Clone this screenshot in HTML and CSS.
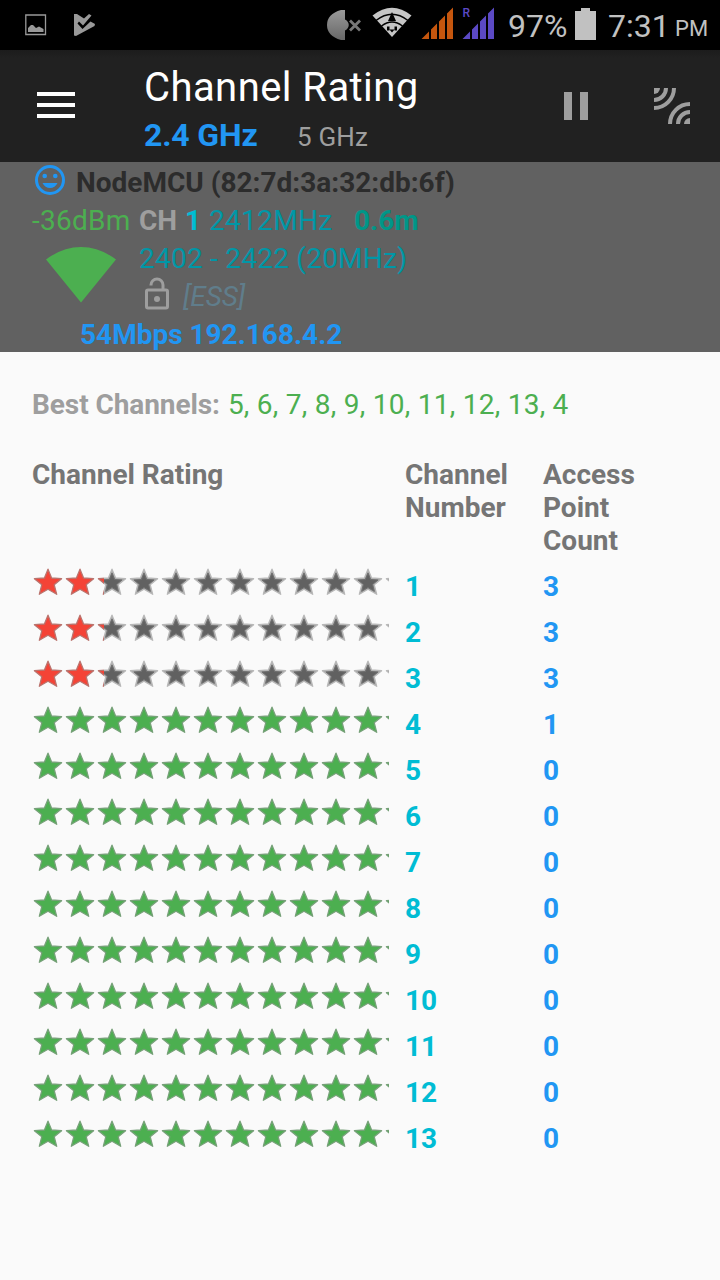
FILE: index.html
```html
<!DOCTYPE html>
<html lang="en">
<head>
<meta charset="utf-8">
<title>Channel Rating</title>
<link rel="stylesheet" href="styles.css">
</head>
<body>
<svg class="defs" width="0" height="0" aria-hidden="true">
  <defs>
    <path id="star" d="M16 1.2 19.6 10 29.6 10.7 22.2 16.7 24.7 26.3 16 21.3 7.3 26.3 9.8 16.7 2.4 10.7 12.4 10Z" stroke-width="1.3" stroke-linejoin="round"/>
    <path id="core" d="M16 5 18.7 11.5 26 12 20.600 16.4 22.300 23.300 16 19.6 9.700 23.300 11.4 16.4 6 12 13.3 11.5Z"/>
    <pattern id="p-grey" width="32" height="28" patternUnits="userSpaceOnUse"><use href="#star" fill="#a0a0a0" stroke="#b8b8b8"/><use href="#core" fill="#616161" stroke="#6e6e6e" stroke-width="1"/></pattern>
    <pattern id="p-red" width="32" height="28" patternUnits="userSpaceOnUse"><use href="#star" fill="#f44336" stroke="#b9736d"/></pattern>
    <pattern id="p-green" width="32" height="28" patternUnits="userSpaceOnUse"><use href="#star" fill="#4caf50" stroke="#76a078"/></pattern>
    <symbol id="low" viewBox="0 0 357 28"><rect x="72" width="285" height="28" fill="url(#p-grey)"/><rect width="72" height="28" fill="url(#p-red)"/></symbol>
    <symbol id="full" viewBox="0 0 357 28"><rect width="357" height="28" fill="url(#p-green)"/></symbol>
  </defs>
</svg>

<header class="status">
  <svg class="notif" width="80" height="50" viewBox="0 0 80 50">
    <path d="M5.800 15H25.500V34.500H5.800Z" fill="none" stroke="#999" stroke-width="1.300"/>
    <path d="M8 32V28L11 25H13L16 28L19 26.500L23.500 29V32Z" fill="#999"/>
    <path d="M54 14 57 14 64 18.500 69 14 71.500 15.500 63 25.500 59 21.500 57.500 23.500 62.500 29 70.500 21.500 75 24 74.500 26 56 36 54 35.500Z" fill="#999"/>
  </svg>
  <svg class="signals" width="176" height="50" viewBox="322 0 176 50">
    <defs><linearGradient id="mute" x1="0" y1="0" x2="0" y2="1"><stop offset="0" stop-color="#999"/><stop offset="1" stop-color="#686868"/></linearGradient></defs>
    <path d="M345 10V19.500C350 22 350 28 345 30.500V40H341Q327 36 327 25Q327 14 341 10Z" fill="url(#mute)"/>
    <path d="M350 20.500 360 30.500M360 20.500 350 30.500" stroke="#777" stroke-width="2.800"/>
    <path d="M372.500 15.500Q392 0 411.500 15.500L392 37Z" fill="#c6c6c6"/>
    <g fill="none" stroke="#000" stroke-width="1.400"><path d="M376 20.500Q392 8 408 20.500M381.500 26Q392 18 402.500 26"/></g>
    <path d="M392 12 396 21H388ZM387 26.500H389.500V30.500H387ZM394.500 26.500H397V30.500H394.500ZM389.500 29.500H394.500L392 32.500Z" fill="#000"/>
    <path d="M421.500 39 429 31.500V39ZM431 39V29.500L437 23.500V39ZM439 39V21.500L445 15.500V39ZM447 39V13.500L453 7.500V39Z" fill="#c5560e"/>
    <path d="M462.500 39 470 31.500V39ZM472 39V29.500L478 23.500V39ZM480 39V21.500L486 15.500V39ZM488 39V13.500L494 7.500V39Z" fill="#5b49c4"/>
    <text x="462.500" y="16.500" class="roaming">R</text>
  </svg>
  <span class="percent">97%</span>
  <svg class="battery" width="22" height="50" viewBox="0 0 22 50"><path d="M6 8H15V11H21V40H0V11H6Z" fill="#c1c1c1"/></svg>
  <span class="clock">7:31</span><span class="ampm">PM</span>
</header>

<nav class="appbar">
  <svg class="menu" width="38" height="27" viewBox="0 0 38 27"><path d="M0 0H38V4H0ZM0 11H38V15H0ZM0 22H38V26H0Z" fill="#fff"/></svg>
  <div class="titles">
    <h1>Channel Rating</h1>
    <div class="bands"><span class="band-on">2.4 GHz</span><span class="band-off">5 GHz</span></div>
  </div>
  <svg class="pause" width="24" height="28" viewBox="0 0 24 28"><path d="M0 0H8V28H0ZM16 0H24V28H16Z" fill="#9e9e9e"/></svg>
  <svg class="waves" width="36" height="36" viewBox="0 0 36 36">
    <g id="quarter" fill="none" stroke="#9e9e9e" stroke-width="4"><path d="M0 0H6A6 6 0 0 1 0 6Z" fill="#9e9e9e" stroke="none"/><path d="M12 0A12 12 0 0 1 0 12M20 0A20 20 0 0 1 0 20"/></g>
    <use href="#quarter" transform="rotate(180 18 18)"/>
  </svg>
</nav>

<section class="connection">
  <div class="line name">
    <svg width="32" height="32" viewBox="0 0 32 32"><circle cx="16" cy="16" r="13.500" fill="none" stroke="#2196f3" stroke-width="3"/><circle cx="10.700" cy="12" r="2.300" fill="#2196f3"/><circle cx="21.300" cy="12" r="2.300" fill="#2196f3"/><path d="M8.500 19H23.500Q21 24 16 24Q11 24 8.500 19Z" fill="#2196f3"/></svg>
    <strong>NodeMCU (82:7d:3a:32:db:6f)</strong>
  </div>
  <div class="line radio"><span class="level">-36dBm</span><strong class="ch">CH</strong><strong class="chnum">1</strong><span class="freq">2412MHz</span><strong class="distance">0.6m</strong></div>
  <div class="middle">
    <svg class="wifi" width="72" height="58" viewBox="0 0 72 58"><path d="M1 13.500Q17.500 1 36 1Q54.500 1 71 13.500L36 56.500Z" fill="#4caf50"/></svg>
    <div>
      <div class="line range">2402 - 2422 (20MHz)</div>
      <div class="line security"><svg width="26" height="36" viewBox="0 0 26 36"><rect x="2.500" y="14" width="21" height="18" rx="1.500" fill="none" stroke="#9e9e9e" stroke-width="3"/><circle cx="13" cy="23" r="3" fill="#9e9e9e"/><path d="M7 9.500V9A6 6 0 0 1 19 9V13.500" fill="none" stroke="#9e9e9e" stroke-width="3"/></svg><em>[ESS]</em></div>
    </div>
  </div>
  <div class="line link">54Mbps 192.168.4.2</div>
</section>

<main>
  <p class="best"><strong>Best Channels:</strong><span>5, 6, 7, 8, 9, 10, 11, 12, 13, 4</span></p>
  <div class="row head"><span>Channel Rating</span><span>Channel Number</span><span>Access Point Count</span></div>
  <div class="row"><svg class="stars"><use href="#low"/></svg><b class="num">1</b><b class="count">3</b></div>
  <div class="row"><svg class="stars"><use href="#low"/></svg><b class="num">2</b><b class="count">3</b></div>
  <div class="row"><svg class="stars"><use href="#low"/></svg><b class="num">3</b><b class="count">3</b></div>
  <div class="row"><svg class="stars"><use href="#full"/></svg><b class="num">4</b><b class="count">1</b></div>
  <div class="row"><svg class="stars"><use href="#full"/></svg><b class="num">5</b><b class="count">0</b></div>
  <div class="row"><svg class="stars"><use href="#full"/></svg><b class="num">6</b><b class="count">0</b></div>
  <div class="row"><svg class="stars"><use href="#full"/></svg><b class="num">7</b><b class="count">0</b></div>
  <div class="row"><svg class="stars"><use href="#full"/></svg><b class="num">8</b><b class="count">0</b></div>
  <div class="row"><svg class="stars"><use href="#full"/></svg><b class="num">9</b><b class="count">0</b></div>
  <div class="row"><svg class="stars"><use href="#full"/></svg><b class="num">10</b><b class="count">0</b></div>
  <div class="row"><svg class="stars"><use href="#full"/></svg><b class="num">11</b><b class="count">0</b></div>
  <div class="row"><svg class="stars"><use href="#full"/></svg><b class="num">12</b><b class="count">0</b></div>
  <div class="row"><svg class="stars"><use href="#full"/></svg><b class="num">13</b><b class="count">0</b></div>
</main>
</body>
</html>
```
FILE: styles.css
```css
* { box-sizing: border-box; }
body { margin: 0; width: 720px; height: 1280px; overflow: hidden; background: #fafafa; font-family: Roboto, sans-serif; font-size: 28px; white-space: nowrap; }
svg { display: block; flex: none; }
.defs { position: absolute; }
.status { height: 50px; display: flex; background: #000; color: #c1c1c1; line-height: 52px; }
.notif { margin-left: 20px; }
.signals { margin-left: 222px; }
.roaming { font: 500 12px Roboto, sans-serif; fill: #5b49c4; }
.percent { width: 67px; margin-left: 10px; font-size: 32px; }
.battery { width: 22px; }
.clock { width: 64px; margin-left: 11px; font-size: 32px; }
.ampm { margin-left: 3px; font-size: 22px; line-height: 58px; }
.appbar { height: 112px; display: flex; background: linear-gradient(#1c1c1c, #212121 8px); }
.menu { margin: 42px 0 0 37px; }
.titles { width: 420px; padding: 14px 0 0 69px; }
h1 { margin: 0; font-size: 40px; font-weight: 400; line-height: 48px; letter-spacing: 0.43px; color: #fff; }
.bands { display: flex; line-height: 46px; }
.band-on { width: 153px; font-size: 32px; font-weight: 700; letter-spacing: -0.15px; color: #2196f3; }
.band-off { font-size: 26px; line-height: 50px; letter-spacing: 0.2px; color: #9e9e9e; }
.pause { margin: 42px 0 0 69px; }
.waves { margin: 38px 0 0 66px; }
.connection { height: 190px; background: #616161; }
.line { height: 38px; line-height: 41px; display: flex; }
.name { padding-left: 34px; color: #2c2c2c; }
.name svg { margin: 2px 10px 0 0; }
.radio { padding-left: 32px; }
.level { width: 107px; letter-spacing: 0.25px; color: #4caf50; }
.ch { width: 46px; color: #9e9e9e; }
.chnum { width: 24px; color: #00bcd4; }
.freq { width: 145px; letter-spacing: 0.3px; color: #0097a7; }
.distance { color: #009688; }
.middle { display: flex; height: 76px; }
.wifi { margin: 8px 22px 0 45px; }
.range { letter-spacing: 0.24px; color: #0097a7; }
.security { padding-left: 5px; color: #607d8b; }
.security svg { margin-right: 13px; }
.link { padding-left: 80px; font-weight: 700; color: #2196f3; }
main { padding: 36px 32px 0; }
.best { display: flex; gap: 8px; margin: 0 0 37px; line-height: 33px; }
.best strong { letter-spacing: -0.08px; color: #9e9e9e; }
.best span { letter-spacing: 0.26px; color: #4caf50; }
.row { height: 46px; display: grid; grid-template-columns: 373px 138px 100px; line-height: 33px; }
.head { height: 109px; font-weight: 700; color: #757575; white-space: normal; }
.stars { width: 357px; height: 28px; margin-top: 1px; }
.row b { padding-top: 3px; font-weight: 700; }
.num { color: #00bcd4; }
.count { color: #2196f3; }
```
